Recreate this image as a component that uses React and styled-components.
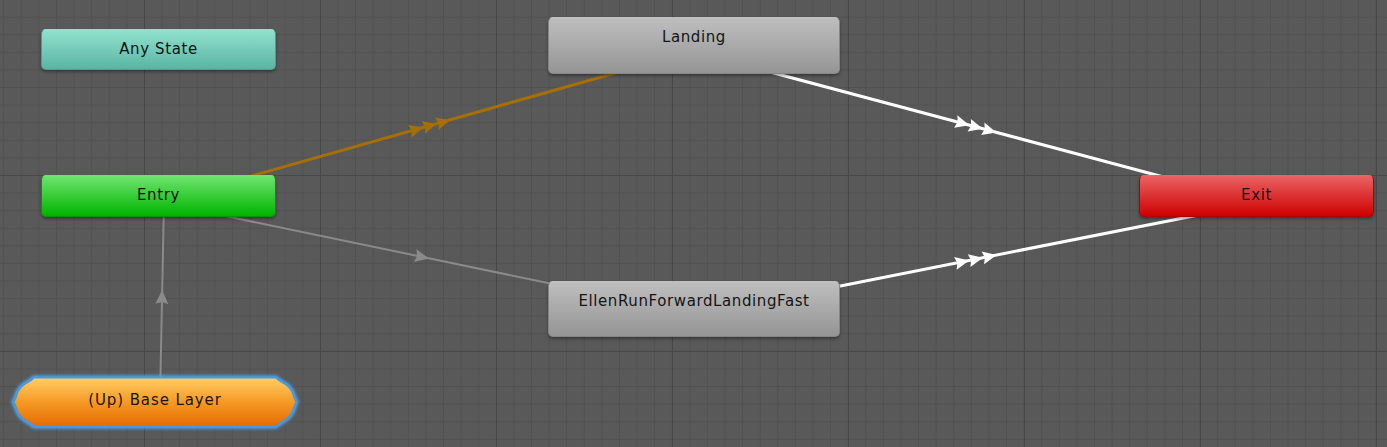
import React from 'react';
import styled, { createGlobalStyle } from 'styled-components';

const GlobalStyle = createGlobalStyle`
  html, body {
    margin: 0;
    padding: 0;
    background: #595959;
    overflow: hidden;
  }
`;

const palettes = {
  any: { top: '#8fe2cd', bottom: '#5bb4a4', edge: '#4f9c8e' },
  state: { top: '#bebebe', bottom: '#959595', edge: '#858585' },
  entry: { top: '#6ee46e', bottom: '#00b400', edge: '#009a00' },
  exit: { top: '#ea6262', bottom: '#cf0000', edge: '#b00000' },
};

// nodes of the animator graph
const nodes = [
  { id: 'any', label: 'Any State', kind: 'any', x: 41, y: 29, w: 235, h: 41 },
  { id: 'landing', label: 'Landing', kind: 'state', x: 548, y: 17, w: 292, h: 57 },
  { id: 'entry', label: 'Entry', kind: 'entry', x: 41, y: 175, w: 235, h: 42 },
  { id: 'exit', label: 'Exit', kind: 'exit', x: 1139, y: 175, w: 235, h: 42 },
  { id: 'ellen', label: 'EllenRunForwardLandingFast', kind: 'state', x: 548, y: 281, w: 292, h: 56 },
];

// transitions: start, end, where the arrow group sits, how many arrows
const edges = [
  { from: [200, 190.6], to: [650, 63.2], mid: [430, 125.6], count: 3, color: '#a56f06', width: 3 },
  { from: [740, 64], to: [1200, 186.7], mid: [976, 127], count: 3, color: '#ffffff', width: 3 },
  { from: [180, 206.6], to: [600, 293.8], mid: [422, 257], count: 1, color: '#8a8a8a', width: 2 },
  { from: [800, 294], to: [1230, 208.7], mid: [976, 259.2], count: 3, color: '#ffffff', width: 3 },
  { from: [160, 400], to: [164, 200], mid: [162, 297], count: 1, color: '#8a8a8a', width: 2 },
];

export default function App() {
  return (
    <>
      <GlobalStyle />
      <Canvas>
        <Edges width="1387" height="447">
          {edges.map((e, i) => (
            <Transition key={i} {...e} />
          ))}
        </Edges>
        {nodes.map((n) => (
          <StateNode key={n.id} $kind={n.kind} $x={n.x} $y={n.y} $w={n.w} $h={n.h}>
            {n.label}
          </StateNode>
        ))}
        <LayerNode>
          <LayerShape viewBox="0 0 284 52" width="284" height="52">
            <defs>
              <linearGradient id="layerFill" x1="0" y1="0" x2="0" y2="1">
                <stop offset="0" stopColor="#ffcd66" />
                <stop offset="0.5" stopColor="#f59a24" />
                <stop offset="1" stopColor="#e46c00" />
              </linearGradient>
              <filter id="glow" x="-10%" y="-40%" width="120%" height="180%">
                <feGaussianBlur stdDeviation="1.6" />
              </filter>
            </defs>
            <path d={layerPath} fill="none" stroke="#4aa8ff" strokeWidth="5" filter="url(#glow)" />
            <path d={layerPath} fill="url(#layerFill)" stroke="#3d98e6" strokeWidth="1.2" />
          </LayerShape>
          <LayerLabel>(Up) Base Layer</LayerLabel>
        </LayerNode>
      </Canvas>
    </>
  );
}

const layerPath =
  'M21 2 L263 2 Q266 5 270 7 Q276 10 279 16 Q281 22 283 26 Q281 30 279 36 Q276 42 270 45 Q266 47 263 50 L21 50 Q18 47 14 45 Q8 42 5 36 Q3 30 1 26 Q3 22 5 16 Q8 10 14 7 Q18 5 21 2 Z';

function Transition({ from, to, mid, count, color, width }) {
  const angle = (Math.atan2(to[1] - from[1], to[0] - from[0]) * 180) / Math.PI;
  const offsets = count === 3 ? [-14, 0, 14] : [0];
  return (
    <g>
      <line x1={from[0]} y1={from[1]} x2={to[0]} y2={to[1]} stroke={color} strokeWidth={width} />
      <g transform={`translate(${mid[0]} ${mid[1]}) rotate(${angle})`}>
        {offsets.map((o) => (
          <polygon key={o} points={`${o + 7},0 ${o - 7},-6.5 ${o - 5},0 ${o - 7},6.5`} fill={color} />
        ))}
      </g>
    </g>
  );
}

const Canvas = styled.div`
  position: relative;
  width: 1387px;
  height: 447px;
  overflow: hidden;
  background-color: #595959;
  background-image:
    linear-gradient(to right, #474747 1px, transparent 1px),
    linear-gradient(to bottom, #474747 1px, transparent 1px),
    linear-gradient(to right, #515151 1px, transparent 1px),
    linear-gradient(to bottom, #515151 1px, transparent 1px);
  background-size: 176px 176px, 176px 176px, 17.6px 17.6px, 17.6px 17.6px;
  background-position: 144px 175px, 144px 175px, 3.2px 16.6px, 3.2px 16.6px;
  font-family: 'DejaVu Sans', 'Liberation Sans', sans-serif;
`;

const Edges = styled.svg`
  position: absolute;
  left: 0;
  top: 0;
`;

const StateNode = styled.div`
  position: absolute;
  left: ${(p) => p.$x}px;
  top: ${(p) => p.$y}px;
  width: ${(p) => p.$w}px;
  height: ${(p) => p.$h}px;
  box-sizing: border-box;
  padding-top: 10px;
  border-radius: 5px;
  border: 1px solid ${(p) => palettes[p.$kind].edge};
  border-top-color: ${(p) => palettes[p.$kind].top};
  background: linear-gradient(${(p) => palettes[p.$kind].top}, ${(p) => palettes[p.$kind].bottom});
  box-shadow: 0 2px 3px rgba(0, 0, 0, 0.35);
  color: #141414;
  font-size: 15px;
  line-height: 18px;
  letter-spacing: 0.6px;
  text-align: center;
`;

const LayerNode = styled.div`
  position: absolute;
  left: 13px;
  top: 376px;
  width: 284px;
  height: 52px;
  display: flex;
  justify-content: center;
  padding-top: 15px;
  box-sizing: border-box;
`;

const LayerShape = styled.svg`
  position: absolute;
  left: 0;
  top: 0;
  overflow: visible;
`;

const LayerLabel = styled.span`
  position: relative;
  color: #1e1408;
  font-size: 15px;
  line-height: 18px;
  letter-spacing: 0.9px;
`;
